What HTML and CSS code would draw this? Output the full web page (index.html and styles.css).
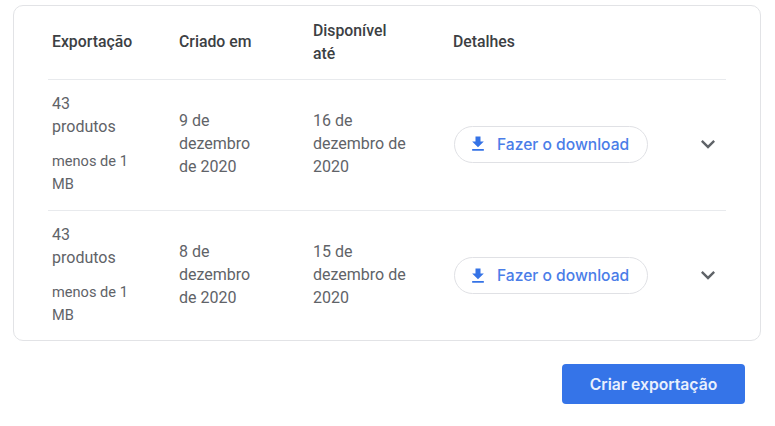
FILE: index.html
```html
<!DOCTYPE html>
<html lang="pt">
<head>
<meta charset="utf-8">
<title>Exportações</title>
<link rel="stylesheet" href="styles.css">
</head>
<body>
<main class="page">
  <section class="card">
    <div class="grid head">
      <div>Exportação</div>
      <div>Criado em</div>
      <div class="narrow">Disponível até</div>
      <div class="details">Detalhes</div>
      <div></div>
    </div>
    <div class="grid row">
      <div class="info">
        <div class="count">43 produtos</div>
        <div class="size">menos de 1 MB</div>
      </div>
      <div class="created">9 de dezembro de 2020</div>
      <div class="until">16 de dezembro de 2020</div>
      <div class="action"><a class="download" href="#"><svg class="dl-icon" viewBox="0 0 24 24"><path d="M19 9h-4V3H9v6H5l7 7 7-7zM5 18v2h14v-2H5z"/></svg>Fazer o download</a></div>
      <div class="chev-cell"><svg class="chev" viewBox="0 0 24 24"><path d="M7.41 8.59 12 13.17l4.59-4.58L18 10l-6 6-6-6z"/></svg></div>
    </div>
    <div class="grid row">
      <div class="info">
        <div class="count">43 produtos</div>
        <div class="size">menos de 1 MB</div>
      </div>
      <div class="created">8 de dezembro de 2020</div>
      <div class="until">15 de dezembro de 2020</div>
      <div class="action"><a class="download" href="#"><svg class="dl-icon" viewBox="0 0 24 24"><path d="M19 9h-4V3H9v6H5l7 7 7-7zM5 18v2h14v-2H5z"/></svg>Fazer o download</a></div>
      <div class="chev-cell"><svg class="chev" viewBox="0 0 24 24"><path d="M7.41 8.59 12 13.17l4.59-4.58L18 10l-6 6-6-6z"/></svg></div>
    </div>
  </section>
  <div class="actions"><button class="create" type="button">Criar exportação</button></div>
</main>
</body>
</html>
```

FILE: styles.css
```css
* { box-sizing: border-box; }
html, body { margin: 0; background: #fff; }
body { width: 775px; height: 426px; overflow: hidden; font-family: Roboto, "Liberation Sans", sans-serif; color: #5f6368; }
.page { padding: 5px 14px 0 13px; }
.card { height: 336px; border: 1px solid #e2e3e6; border-radius: 10px; padding: 0 34px; }
.grid { display: grid; grid-template-columns: 127px 134px 141px 1fr 36px; align-items: center; }
.grid > div { padding-left: 4px; }
.head { height: 74px; padding-bottom: 2px; border-bottom: 1px solid #e8eaed; font-size: 15.8px; line-height: 23px; font-weight: 500; color: #3c4043; }
.grid > .details { padding-left: 3px; }
.narrow { width: 90px; }
.row { height: 131px; padding-bottom: 4px; font-size: 16px; line-height: 23px; }
.row:nth-child(2) { border-bottom: 1px solid #e8eaed; }
.info { width: 80px; margin-top: 1px; }
.size { font-size: 14.6px; margin-top: 12px; }
.created { width: 90px; }
.until { width: 110px; }
.action { margin-top: 2px; }
.download { display: inline-flex; align-items: center; width: 194px; height: 37px; border: 1px solid #e0e1e5; border-radius: 19px; padding-left: 13px; text-decoration: none; color: #4a7de8; font-family: Inter, Roboto, sans-serif; font-size: 15.6px; font-weight: 500; }
.dl-icon { width: 20px; height: 20px; fill: #3573e6; margin-right: 9px; }
.grid > .chev-cell { padding-left: 0; margin-top: 1px; display: flex; justify-content: center; }
.chev { width: 28px; height: 28px; fill: #5f6368; }
.actions { display: flex; justify-content: flex-end; padding: 23px 16px 0 0; }
.create { width: 183px; height: 40px; border: 0; border-radius: 4px; background: #3574e8; color: #e9f0fd; font-family: Inter, Roboto, sans-serif; font-size: 15.7px; font-weight: 600; }
```
